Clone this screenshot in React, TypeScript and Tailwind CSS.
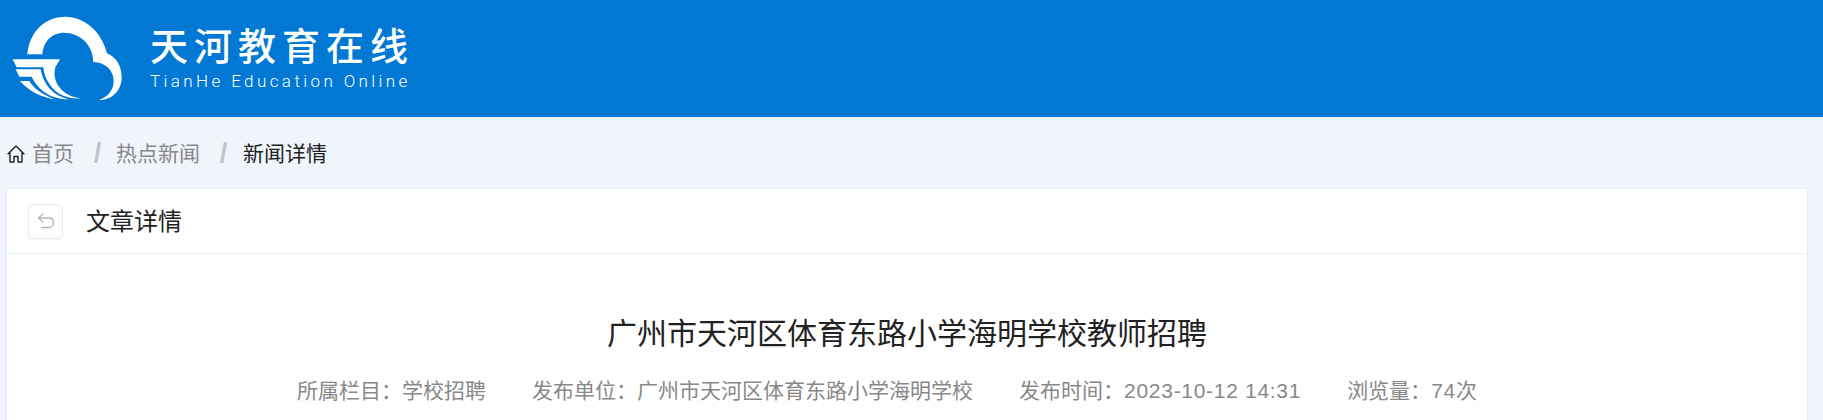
import React from 'react';

const cjk = "font-['Liberation_Sans','Noto_Sans_CJK_SC',sans-serif]";

const Logo = () => (
  <svg width="140" height="100" viewBox="0 0 420 300" fill="#fff" className="mt-[3px] shrink-0">
    <path d="M82 133C88 65 135 20 195 20C255 20 305 65 321 130C350 142 366 170 365 205C363 245 335 270 295 271C330 258 345 232 340 203C335 175 312 157 280 156C280 105 240 68 192 68C155 68 130 95 127 133Z" />
    <path d="M38 148H180L166 172C160 195 165 220 185 240C202 256 222 263 246 265C205 268 172 255 150 225C138 208 131 190 130 172H50Z" />
    <path d="M47 178H122C125 198 135 220 150 237C165 253 185 263 206 268C170 268 138 255 115 230C106 220 100 210 95 200H58Z" />
    <path d="M60 213H88C100 232 120 252 165 268C125 262 88 245 60 213Z" />
  </svg>
);

const HomeIcon = () => (
  <svg width="18" height="18" viewBox="0 0 18 18" fill="none" stroke="#222" strokeWidth="1.4" strokeLinejoin="round" className="shrink-0">
    <path d="M0.7 9.3 9 1 17.3 9.3M3 7.5V17H7V11.5H11V17H15V7.5" />
  </svg>
);

const BackIcon = () => (
  <svg width="18" height="16" viewBox="0 0 18 16" fill="none" stroke="#b4b8c0" strokeWidth="1.4" strokeLinecap="round" strokeLinejoin="round">
    <path d="M6 1 1.5 5 6 9M1.5 5H12C14.8 5 16.5 7 16.5 9.5C16.5 12 14.8 14.5 12 14.5H5" />
  </svg>
);

const Slash = () => (
  <span className="w-[42px] pl-[5px] text-center text-[27px] leading-none font-bold text-[#c0c4cc]">/</span>
);

export default function App() {
  return (
    <div className={`h-[420px] overflow-hidden bg-[#f0f5fc] ${cjk}`}>
      <header className="flex h-[117px] items-center bg-[#0078d4]">
        <Logo />
        <div className="ml-[10px] flex flex-col pb-[6px] text-white">
          <div className="font-['Noto_Sans_CJK_SC',sans-serif] text-[38px] leading-[46px] font-medium tracking-[6px] whitespace-nowrap">天河教育在线</div>
          <div className="mt-[4px] font-['Roboto',sans-serif] text-[17px] leading-[20px] font-light tracking-[3.4px] whitespace-nowrap">TianHe Education Online</div>
        </div>
      </header>

      <nav className="flex h-[72px] items-center pt-[1px] pl-[7px] text-[21px] text-[#888]">
        <HomeIcon />
        <span className="ml-[7px]">首页</span>
        <Slash />
        <span>热点新闻</span>
        <Slash />
        <span className="ml-[1px] text-[#222]">新闻详情</span>
      </nav>

      <main className="ml-[7px] mr-[16px] h-[300px] bg-white shadow-sm">
        <div className="flex h-[65px] items-center border-b border-[#ebeef5] pl-[21px]">
          <button className="flex h-[35px] w-[35px] items-center justify-center rounded-md border border-[#e8eaf0] bg-white shadow-xs">
            <BackIcon />
          </button>
          <h2 className="ml-[23px] pt-[1px] text-[24px] text-[#222]">文章详情</h2>
        </div>
        <h1 className="mt-[58px] text-center text-[30px] leading-[44px] text-[#222]">广州市天河区体育东路小学海明学校教师招聘</h1>
        <div className="mt-[21px] flex justify-center gap-[46px] pr-[40px] text-[21px] leading-[28px] text-[#888]">
          <span>所属栏目：学校招聘</span>
          <span>发布单位：广州市天河区体育东路小学海明学校</span>
          <span>发布时间：<span className="tracking-[0.7px]">2023-10-12 14:31</span></span>
          <span>浏览量：<span className="tracking-[0.7px]">74</span>次</span>
        </div>
      </main>
    </div>
  );
}
